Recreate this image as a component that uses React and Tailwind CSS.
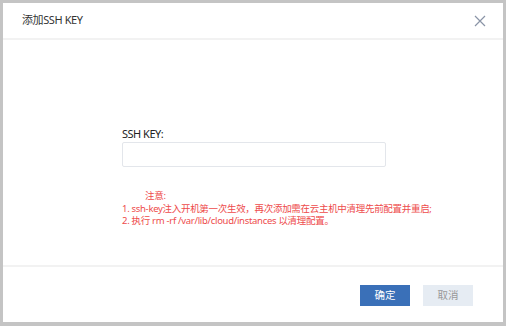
import React from 'react';

const font = { fontFamily: '"Noto Sans", "Noto Sans CJK SC", sans-serif' };

const App = () => {
  return (
    <div className="w-[506px] h-[326px] bg-[#c4c4c4] pt-[3px] px-[3px] pb-[4px]" style={font}>
      <div className="flex flex-col h-full bg-white">
        <div className="flex items-center justify-between h-[37px] pl-[19px] pr-[17px] border-b-2 border-[#f2f2f2]">
          <span className="text-[11px] tracking-[-0.4px] text-[#333]">添加SSH KEY</span>
          <svg width="12" height="12" viewBox="0 0 12 12" className="text-[#8a94a6]">
            <path d="M1 1L11 11M11 1L1 11" stroke="currentColor" strokeWidth="1.2" />
          </svg>
        </div>
        <div className="flex-1 pl-[119px] pt-[87px]">
          <div className="text-[11px] leading-[14px] tracking-[-0.5px] text-[#222]">SSH KEY:</div>
          <div className="mt-[1px] w-[264px] h-[25px] border border-[#e3e6eb] rounded-[2px]"></div>
          <div className="mt-[23px] text-[9.5px] leading-[12.5px] tracking-[-0.3px] text-[#ee4b4b]">
            <div className="pl-[23px]">注意:</div>
            <div>1. ssh-key注入开机第一次生效，再次添加需在云主机中清理先前配置并重启;</div>
            <div>2. 执行 rm -rf /var/lib/cloud/instances 以清理配置。</div>
          </div>
        </div>
        <div className="flex justify-end gap-[13px] h-[57px] pt-[18px] pr-[30px] border-t-2 border-[#f2f2f2]">
          <button className="w-[50px] h-[21px] bg-[#3a70b8] text-white text-[10.5px]">确定</button>
          <button className="w-[50px] h-[21px] bg-[#e6ecf3] text-[#999] text-[10.5px]">取消</button>
        </div>
      </div>
    </div>
  );
};

export default App;
